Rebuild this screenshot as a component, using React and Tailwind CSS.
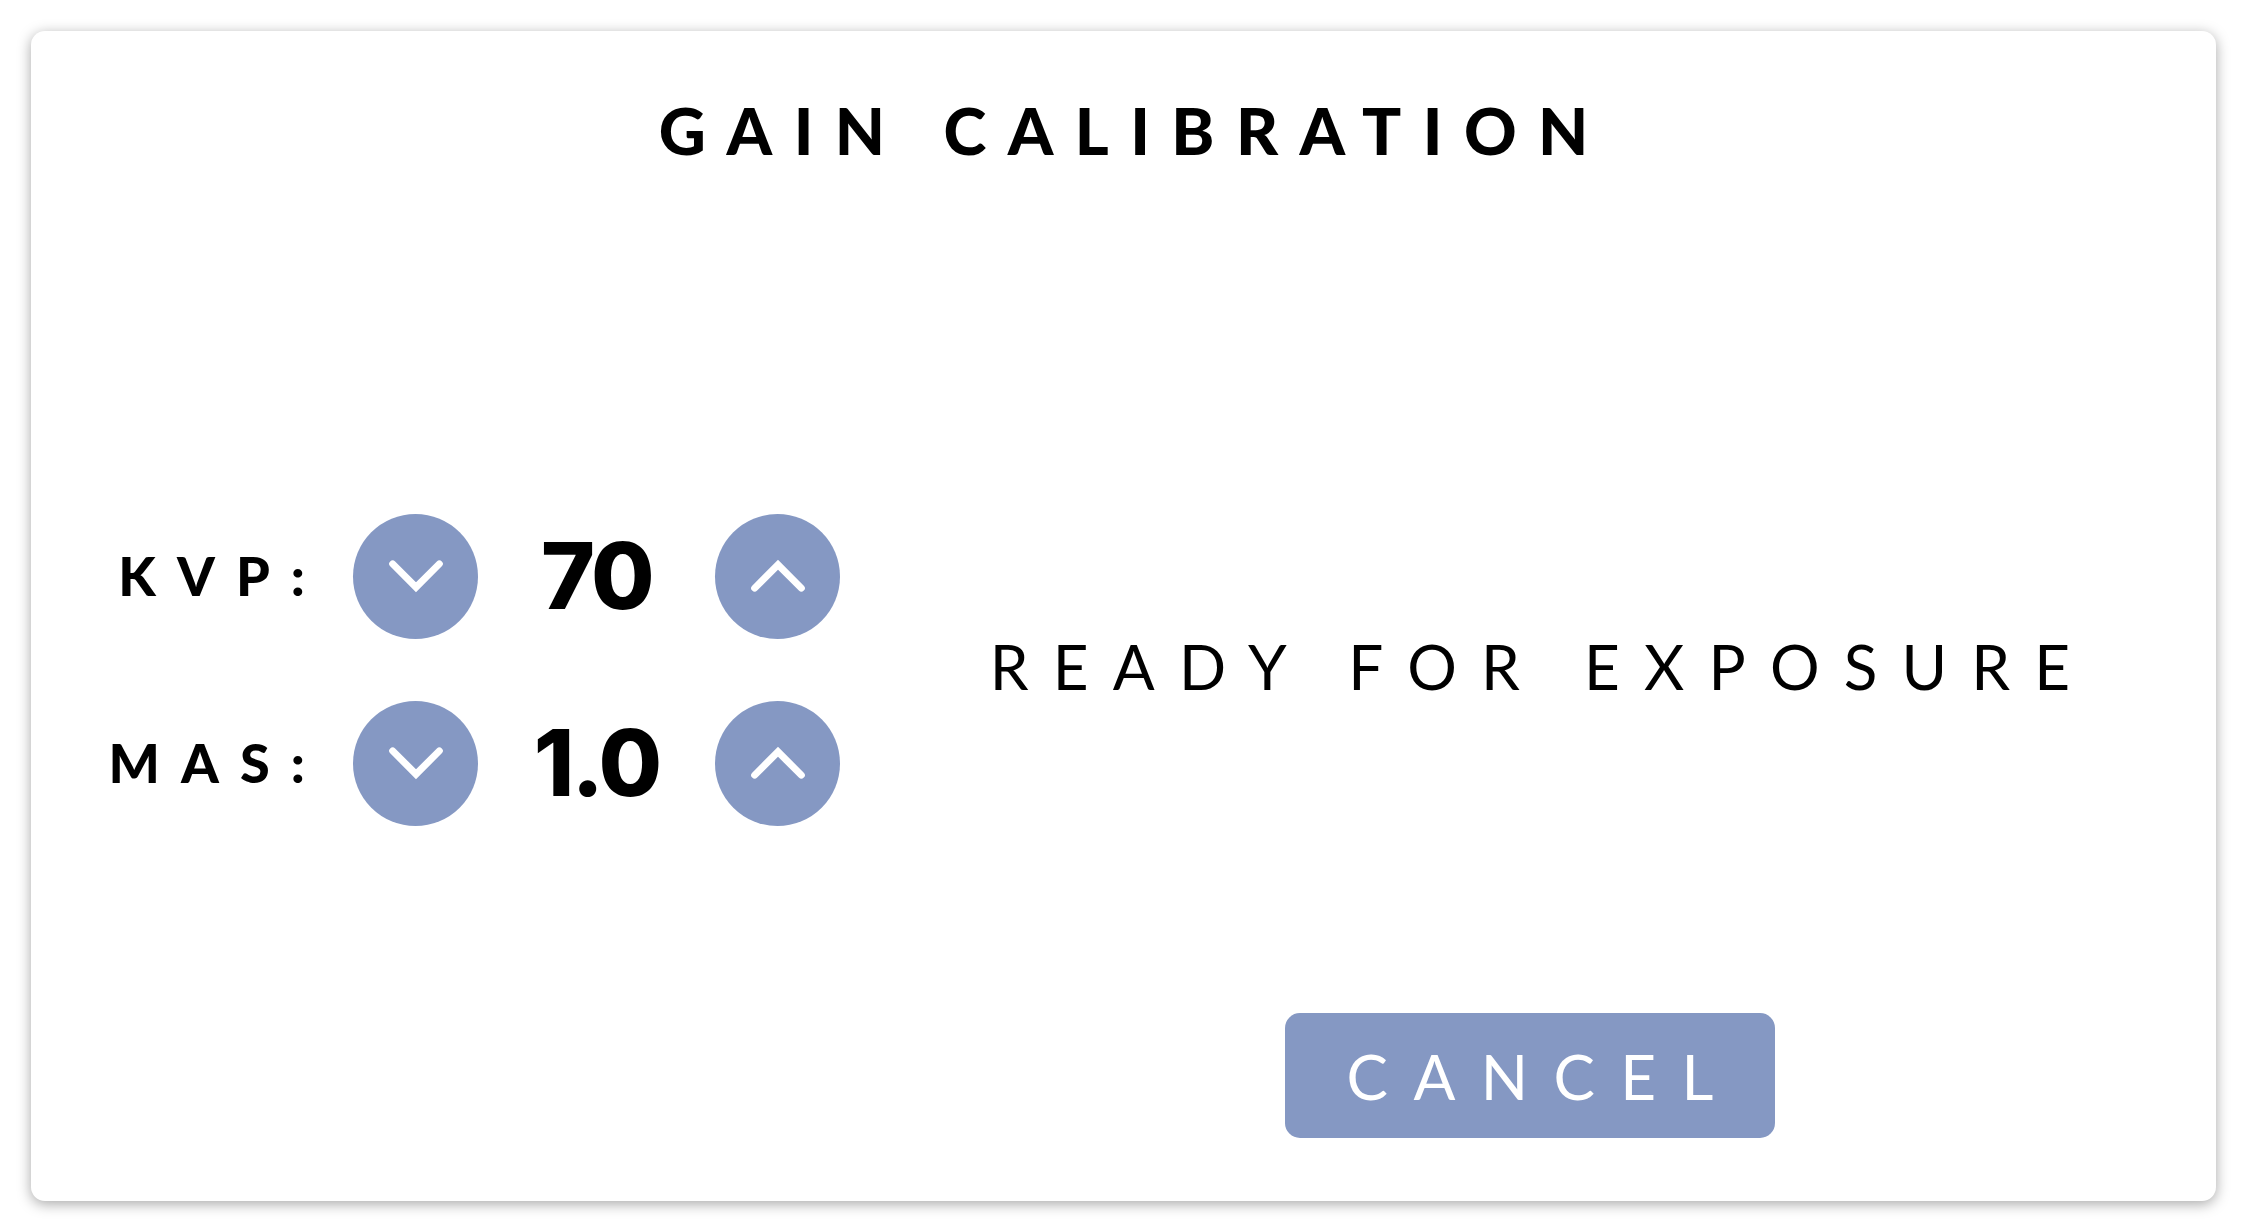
import React, { useState } from 'react';

const Chevron = ({ dir }) => (
  <svg viewBox="0 0 60 36" className="w-[56px] h-[34px]" fill="none">
    <path
      d={dir === 'up' ? 'M5 31 L30 6 L55 31' : 'M5 5 L30 30 L55 5'}
      stroke="white"
      strokeWidth="7.5"
      strokeLinecap="round"
      strokeLinejoin="miter"
    />
  </svg>
);

const RoundButton = ({ dir, onClick }) => (
  <button
    onClick={onClick}
    className="w-[125px] h-[125px] rounded-full bg-[#8598c3] flex items-center justify-center shrink-0"
  >
    <Chevron dir={dir} />
  </button>
);

const Stepper = ({ label, value, onDown, onUp }) => (
  <div className="flex items-center h-[125px]">
    <div className="w-[272px] pr-[27px] text-right font-['Lato',sans-serif] font-black text-[54px] leading-none tracking-[0.39em] text-black">
      {label}
    </div>
    <RoundButton dir="down" onClick={onDown} />
    <div className="w-[237px] text-center font-['Inter',sans-serif] font-extrabold text-[92px] leading-none tracking-[-0.03em] text-black">
      {value}
    </div>
    <RoundButton dir="up" onClick={onUp} />
  </div>
);

export default function App() {
  const [kvp, setKvp] = useState(70);
  const [mas, setMas] = useState(1.0);

  return (
    <div className="w-full h-screen bg-white p-[31px]">
      <div className="h-full flex flex-col bg-white rounded-[14px] shadow-[0_3px_14px_rgba(0,0,0,0.35)]">
        <div className="h-[295px] pt-[67px] flex justify-center">
          <h1 className="font-['Lato',sans-serif] font-black text-[65px] leading-none tracking-[0.33em] mr-[-0.33em] text-black">
            GAIN CALIBRATION
          </h1>
        </div>

        <div className="flex-1 flex items-center">
          <div className="w-[813px] pl-[50px] flex flex-col gap-[62px]">
            <Stepper
              label="KVP:"
              value={kvp}
              onDown={() => setKvp(kvp - 1)}
              onUp={() => setKvp(kvp + 1)}
            />
            <Stepper
              label="MAS:"
              value={mas.toFixed(1)}
              onDown={() => setMas(Math.max(0.1, mas - 0.1))}
              onUp={() => setMas(mas + 0.1)}
            />
          </div>
          <div className="flex-1 flex justify-center pb-[8px]">
            <p className="font-['Lato',sans-serif] font-normal text-[62px] leading-none tracking-[0.39em] mr-[-0.39em] text-black">
              READY FOR EXPOSURE
            </p>
          </div>
        </div>

        <div className="flex pb-[63px]">
          <div className="w-[813px]" />
          <div className="flex-1 flex justify-center">
            <button className="w-[490px] h-[125px] rounded-[15px] bg-[#8598c3] flex items-center justify-center">
              <span className="font-['Lato',sans-serif] font-normal text-[62px] leading-none tracking-[0.41em] mr-[-0.41em] text-white">
                CANCEL
              </span>
            </button>
          </div>
        </div>
      </div>
    </div>
  );
}
